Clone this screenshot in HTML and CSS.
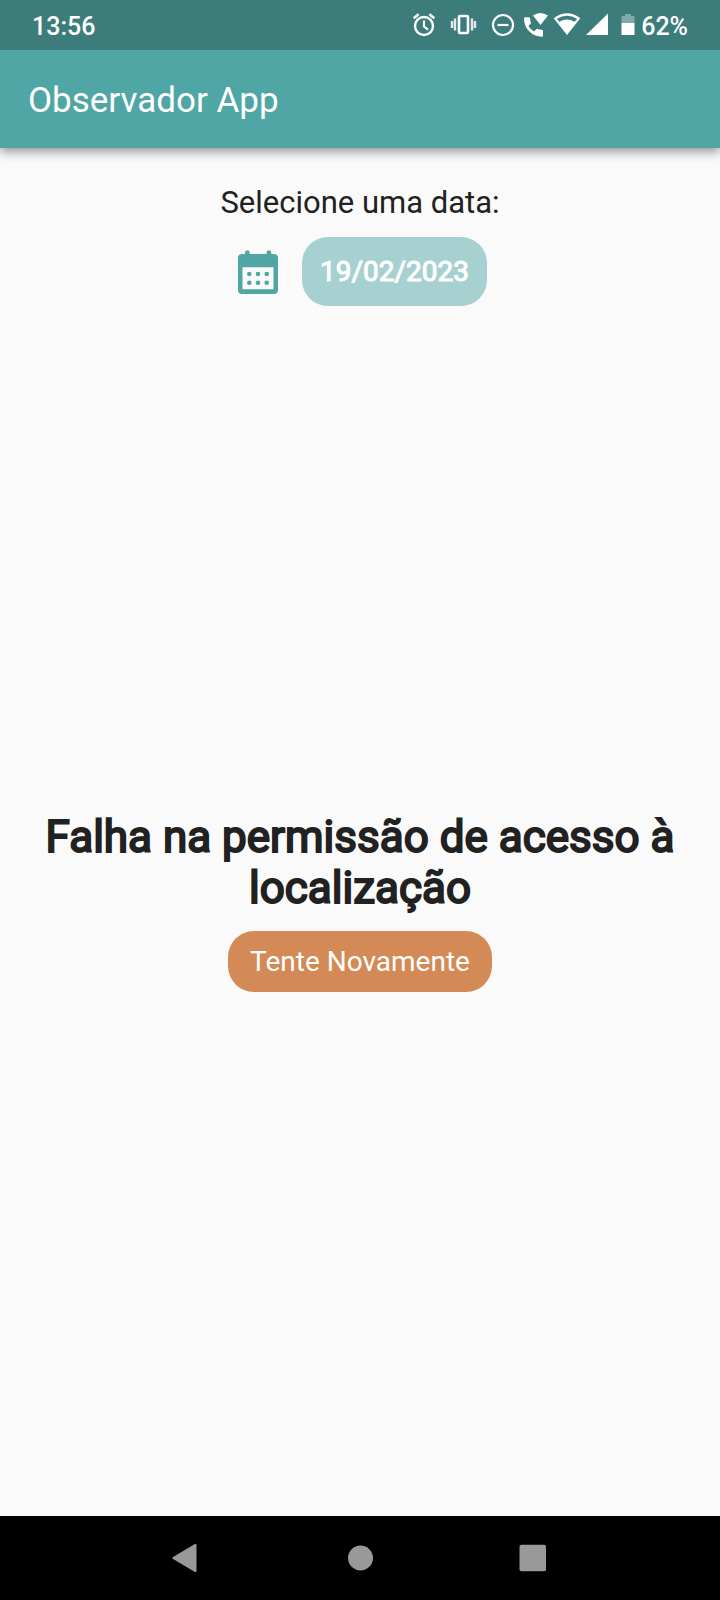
FILE: index.html
```html
<!DOCTYPE html>
<html lang="pt-BR">
<head>
<meta charset="utf-8">
<meta name="viewport" content="width=device-width, initial-scale=1">
<title>Observador App</title>
<link rel="stylesheet" href="styles.css">
</head>
<body class="screen">
<div class="status-bar">
  <time class="status-text">13:56</time>
  <div class="status-icons">
    <svg class="icon-alarm" width="24" height="26" viewBox="412 12 24 26" fill="none" stroke="#fff" aria-hidden="true"><circle cx="424" cy="26" r="9" stroke-width="2.400"/><path d="M424 20.500v6l4 3.200" stroke-width="2.200"/><path d="M413.600 18.200l5-4M434.400 18.200l-5-4" stroke-width="2.400"/></svg>
    <svg class="icon-vibrate" width="26" height="26" viewBox="451.500 12 26 26" fill="none" stroke="#fff" aria-hidden="true"><rect x="459.500" y="16" width="9" height="17" rx="1" stroke-width="2.600"/><path d="M452.500 21v7M455.500 18.500v12M472.500 18.500v12M475.500 21v7" stroke-width="2.400" opacity=".85"/></svg>
    <svg class="icon-silent" width="24" height="26" viewBox="491 12 24 26" fill="none" stroke="#fff" stroke-width="2.200" aria-hidden="true"><circle cx="503" cy="25" r="10"/><path d="M497.500 25h11"/></svg>
    <svg class="icon-call" width="26" height="26" viewBox="523 12 26 26" fill="#fff" aria-hidden="true"><path d="M525.200 17.200h3.600q1.200 0 1.300 1.200 0.100 2 .8 4 .3 .8-.3 1.400l-2.200 2.100q2 3.500 5.700 5.500l2.100-2.200q.6-.6 1.400-.3 2 .7 4.200.8 1.200.1 1.200 1.300v4.500q0 1.200-1.200 1.200-7.500 0-12.600-5.400-5-5-5.200-12.900 0-1.200 1.200-1.200z"/><path d="M533 15.500q7.300-5 15 0L540.500 25z"/></svg>
    <svg class="icon-wifi" width="28" height="26" viewBox="553 12 28 26" aria-hidden="true"><path fill="#fff" fill-rule="evenodd" d="M553.700 18.200q13.300-10 26.600 0L567 35zM556.800 19l2.700 2.700q7.500-4.200 15 0l2.700-2.700q-10.200-6.500-20.400 0z"/></svg>
    <svg class="icon-signal" width="23" height="26" viewBox="586 12 23 26" fill="#fff" aria-hidden="true"><path d="M586 35L608 13.500V35z"/></svg>
    <svg class="icon-battery" width="14" height="26" viewBox="620.500 12 14 26" fill="#fff" aria-hidden="true"><path opacity=".35" d="M621 16h3.500v-2h6v2h3.500v7h-13z"/><path d="M621 23h13v12h-13z"/></svg>
    <span class="status-text">62%</span>
  </div>
</div>
<header class="app-bar"><h1 class="app-title">Observador App</h1></header>
<main class="content">
  <section class="date-section">
    <p class="date-label" id="date-label">Selecione uma data:</p>
    <div class="date-row">
      <button class="calendar-button" type="button" aria-label="Abrir calendário"><svg width="40" height="44" viewBox="0 0 40 44" aria-hidden="true"><path fill="#50a5a5" fill-rule="evenodd" d="M4 4h3V2.500a2.300 2.300 0 0 1 4.600 0V4h17V2.500a2.300 2.300 0 0 1 4.600 0V4H36a4 4 0 0 1 4 4v32a4 4 0 0 1-4 4H4a4 4 0 0 1-4-4V8a4 4 0 0 1 4-4zM4.500 17.300v22h31v-22z"/><g fill="#50a5a5"><circle cx="11.300" cy="24" r="2.300"/><circle cx="20" cy="24" r="2.300"/><circle cx="28.700" cy="24" r="2.300"/><circle cx="11.300" cy="32.700" r="2.300"/><circle cx="20" cy="32.700" r="2.300"/><circle cx="28.700" cy="32.700" r="2.300"/></g></svg></button>
      <button class="date-button" type="button" aria-describedby="date-label">19/02/2023</button>
    </div>
  </section>
  <section class="error-section">
    <h2 class="error-title">Falha na permissão de acesso à localização</h2>
    <button class="retry-button" type="button">Tente Novamente</button>
  </section>
</main>
<nav class="system-nav" aria-label="Navegação do sistema">
  <button class="nav-button" type="button" aria-label="Voltar"><svg width="28" height="30" viewBox="3 0 28 30" aria-hidden="true"><path fill="#999" d="M2.700 14.200Q1.700 15 2.700 15.800L24.500 28.800Q26.500 29.500 26.500 28V2Q26.500 .5 24.500 1.200z"/></svg></button>
  <button class="nav-button" type="button" aria-label="Início"><svg width="28" height="30" viewBox="0 0 28 30" aria-hidden="true"><circle fill="#999" cx="14.500" cy="15" r="12.500"/></svg></button>
  <button class="nav-button" type="button" aria-label="Recentes"><svg width="28" height="30" viewBox="0 0 28 30" aria-hidden="true"><rect fill="#999" x=".500" y="1.700" width="26.500" height="26.500" rx="2"/></svg></button>
</nav>
</body>
</html>
```
FILE: styles.css
```css
* { box-sizing: border-box; }
.screen {
  margin: 0;
  min-height: 100vh;
  display: flex;
  flex-direction: column;
  background: #fafafa;
  color: #212121;
  font-family: Roboto, "Liberation Sans", sans-serif;
}
button {
  border: 0;
  padding: 0;
  background: none;
  font-family: inherit;
  cursor: pointer;
}
svg { display: block; overflow: visible; }
.status-bar {
  height: 50px;
  padding: 0 32px;
  display: flex;
  align-items: center;
  justify-content: space-between;
  background: #3c7c7b;
  color: #fff;
}
.status-text { font-size: 25px; line-height: 30px; font-weight: 500; padding-top: 3px; }
.status-icons { display: flex; align-items: center; }
.icon-alarm { margin-right: 15px; }
.icon-vibrate { margin-right: 14px; }
.icon-silent { margin-right: 8px; }
.icon-call { margin-right: 4px; }
.icon-wifi { margin-right: 5px; }
.icon-signal { margin-right: 12px; }
.icon-battery { margin-right: 6px; }
.app-bar {
  height: 98px;
  padding: 4px 28px 0;
  display: flex;
  align-items: center;
  background: #50a5a5;
  color: #fff;
  box-shadow: 0 4px 10px rgba(0, 0, 0, 0.4);
  clip-path: inset(0 0 -20px 0);
}
.app-title { margin: 0; font-size: 35px; line-height: 42px; font-weight: 400; }
.content { flex: 1; display: flex; flex-direction: column; }
.date-section {
  padding-top: 36px;
  display: flex;
  flex-direction: column;
  align-items: center;
  gap: 15px;
}
.date-label { margin: 0; font-size: 31px; line-height: 38px; }
.date-row { display: flex; align-items: center; gap: 12px; padding-right: 7px; }
.calendar-button { padding: 0 12px; }
.date-button {
  padding: 18px;
  border-radius: 26px;
  background: #a7d1d0;
  color: #fff;
  font-size: 28px;
  line-height: 33px;
  -webkit-text-stroke: 1px #fff;
}
.error-section {
  flex: 1;
  padding: 0 40px 19px;
  display: flex;
  flex-direction: column;
  align-items: center;
  justify-content: center;
  gap: 17px;
}
.error-title {
  margin: 0;
  text-align: center;
  font-size: 44px;
  line-height: 51px;
  font-weight: 400;
  -webkit-text-stroke: 2px #212121;
}
.retry-button {
  padding: 14px 22px;
  border-radius: 26px;
  background: #d48a56;
  color: #fff;
  font-size: 28px;
  line-height: 33px;
}
.system-nav {
  height: 84px;
  padding: 0 100px;
  display: grid;
  grid-template-columns: repeat(3, 1fr);
  justify-items: center;
  background: #000;
}
```
